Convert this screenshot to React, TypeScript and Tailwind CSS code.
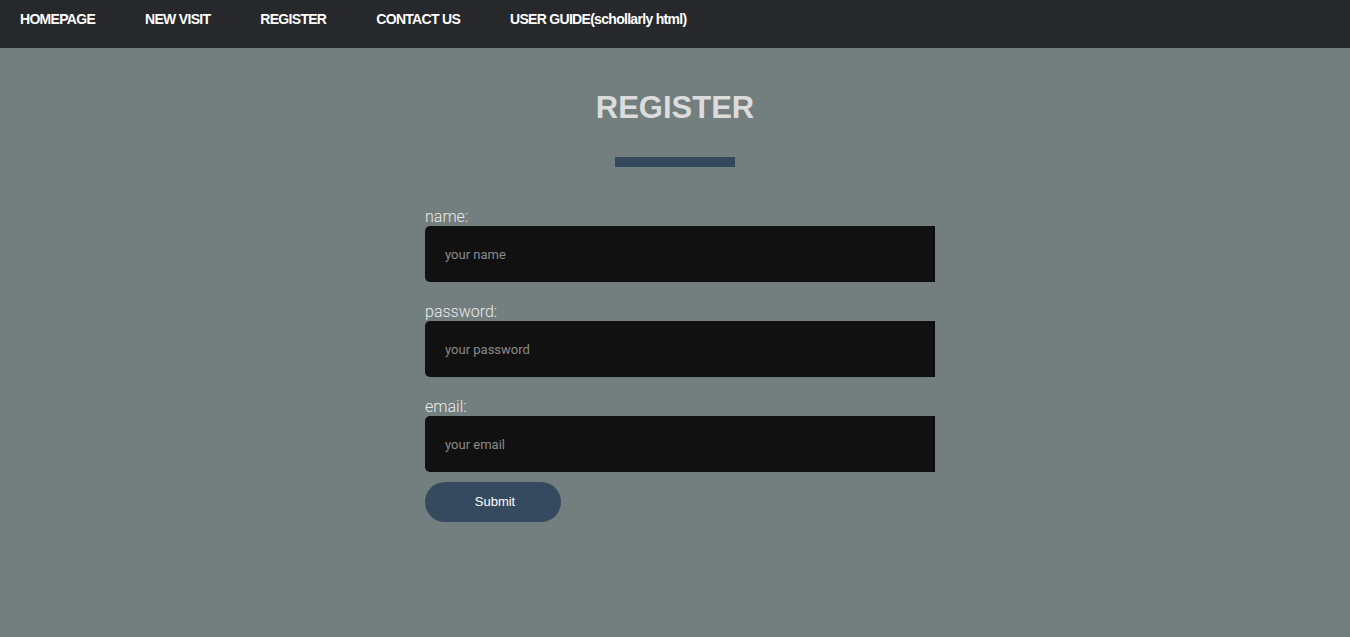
import React from 'react'

const navItems = ['HOMEPAGE', 'NEW VISIT', 'REGISTER', 'CONTACT US', 'USER GUIDE(schollarly html)']

const fields = [
  { label: 'name:', placeholder: 'your name', type: 'text' },
  { label: 'password:', placeholder: 'your password', type: 'password' },
  { label: 'email:', placeholder: 'your email', type: 'email' }
]

export default function App() {
  return (
    <div className="min-h-[637px] bg-[#737e7f] font-['Roboto',sans-serif]">
      {/* Barra superior */}
      <nav className="h-[48px] bg-[#27282c] flex items-start pl-5 pt-[11px] gap-[50px]">
        {navItems.map((item) => (
          <a
            key={item}
            href="#"
            className="text-white text-[14px] font-bold leading-[17px] font-['Liberation_Sans',sans-serif] tracking-[-0.7px]"
          >
            {item}
          </a>
        ))}
      </nav>

      <div className="flex flex-col items-center pt-[43px]">
        <h1 className="text-[31px] leading-[34px] font-bold text-[#dcdcdc] font-['Liberation_Sans',sans-serif]">
          REGISTER
        </h1>
        <div className="w-[120px] h-[10px] bg-[#34495e] mt-[32px]" />
      </div>

      {/* Formulario */}
      <form className="w-[520px] mx-auto pl-[10px] mt-[41px]" onSubmit={(e) => e.preventDefault()}>
        {fields.map((f, i) => (
          <div key={f.label} className={i === fields.length - 1 ? 'mb-[10px]' : 'mb-[21px]'}>
            <label className="block text-[16px] leading-[18px] font-light text-[#ebebeb]">{f.label}</label>
            <input
              type={f.type}
              placeholder={f.placeholder}
              className="block w-full h-[56px] bg-[#111111] rounded-l-[5px] border-r-2 border-[#0a0a0a] px-5 text-[13px] text-[#ccc] placeholder:text-[#8a8a8a] outline-none"
            />
          </div>
        ))}
        <button
          type="submit"
          className="w-[136px] h-[40px] rounded-full bg-[#364a5f] text-white text-[13px] pl-1 font-['Liberation_Sans',sans-serif]"
        >
          Submit
        </button>
      </form>
    </div>
  )
}
